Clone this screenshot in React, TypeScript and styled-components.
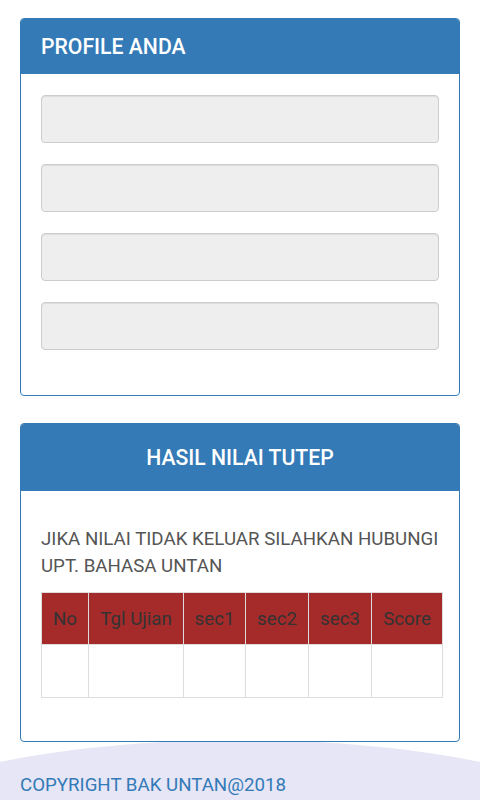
import React from 'react';
import styled, { createGlobalStyle } from 'styled-components';

const GlobalStyle = createGlobalStyle`
  html, body {
    margin: 0;
    padding: 0;
    background: #fff;
    font-family: Roboto, "Liberation Sans", Arial, sans-serif;
    color: #555;
  }
  * { box-sizing: border-box; }
`;

const Page = styled.div`
  display: flex;
  flex-direction: column;
  overflow: hidden;
`;

const Content = styled.div`
  padding: 18px 20px 0 20px;
  display: flex;
  flex-direction: column;
  gap: 27px;
  position: relative;
  z-index: 1;
`;

const Panel = styled.section`
  border: 1px solid #337ab7;
  border-radius: 4px;
  background: #fff;
  overflow: hidden;
`;

const PanelHeading = styled.h3<{ $center?: boolean; $height: number }>`
  margin: 0;
  height: ${p => p.$height}px;
  display: flex;
  align-items: center;
  justify-content: ${p => (p.$center ? 'center' : 'flex-start')};
  padding: 0 20px;
  background: #337ab7;
  color: #fff;
  font-size: 21.2px;
  font-weight: 500;
`;

const PanelBody = styled.div<{ $top: number; $bottom: number }>`
  padding: ${p => p.$top}px 20px ${p => p.$bottom}px 20px;
  display: flex;
  flex-direction: column;
`;

const FieldList = styled.div`
  display: flex;
  flex-direction: column;
  gap: 21px;
`;

const Field = styled.input`
  height: 48px;
  width: 100%;
  background: #eee;
  border: 1px solid #ccc;
  border-radius: 4px;
  box-shadow: inset 0 1px 1px rgba(0, 0, 0, 0.075);
  outline: none;
`;

const Notice = styled.p`
  margin: 0 0 12px 0;
  font-size: 18.7px;
  line-height: 27px;
  color: #555;
`;

const Table = styled.table`
  border-collapse: collapse;
  table-layout: fixed;
  width: 401px;
`;

const HeadCell = styled.th`
  height: 52px;
  background: #a52a2a;
  color: #333;
  font-weight: 400;
  font-size: 18.7px;
  border: 1px solid #ddd;
  padding: 0;
  text-align: center;
`;

const Cell = styled.td`
  height: 53px;
  border: 1px solid #ddd;
`;

const Footer = styled.footer`
  position: relative;
  margin-top: -2px;
  height: 60px;
  padding: 34px 20px 0 20px;
  color: #337ab7;
  font-size: 18.7px;

  &::before {
    content: '';
    position: absolute;
    top: 0;
    left: -160px;
    width: 800px;
    height: 220px;
    border-radius: 50%;
    background: #e6e6f6;
    z-index: 0;
  }
`;

const FooterText = styled.span`
  position: relative;
  z-index: 1;
`;

const columns = [
  { label: 'No', width: 47 },
  { label: 'Tgl Ujian', width: 95 },
  { label: 'sec1', width: 62 },
  { label: 'sec2', width: 63 },
  { label: 'sec3', width: 63 },
  { label: 'Score', width: 71 },
];

const App: React.FC = () => {
  return (
    <Page>
      <GlobalStyle />
      <Content>
        <Panel>
          <PanelHeading $height={55}>PROFILE ANDA</PanelHeading>
          <PanelBody $top={21} $bottom={45}>
            <FieldList>
              <Field readOnly />
              <Field readOnly />
              <Field readOnly />
              <Field readOnly />
            </FieldList>
          </PanelBody>
        </Panel>

        <Panel>
          <PanelHeading $center $height={67}>HASIL NILAI TUTEP</PanelHeading>
          <PanelBody $top={35} $bottom={43}>
            <Notice>JIKA NILAI TIDAK KELUAR SILAHKAN HUBUNGI UPT. BAHASA UNTAN</Notice>
            <Table>
              <colgroup>
                {columns.map(c => (
                  <col key={c.label} style={{ width: c.width }} />
                ))}
              </colgroup>
              <thead>
                <tr>
                  {columns.map(c => (
                    <HeadCell key={c.label}>{c.label}</HeadCell>
                  ))}
                </tr>
              </thead>
              <tbody>
                <tr>
                  {columns.map(c => (
                    <Cell key={c.label} />
                  ))}
                </tr>
              </tbody>
            </Table>
          </PanelBody>
        </Panel>
      </Content>
      <Footer>
        <FooterText>COPYRIGHT BAK UNTAN@2018</FooterText>
      </Footer>
    </Page>
  );
};

export default App;
